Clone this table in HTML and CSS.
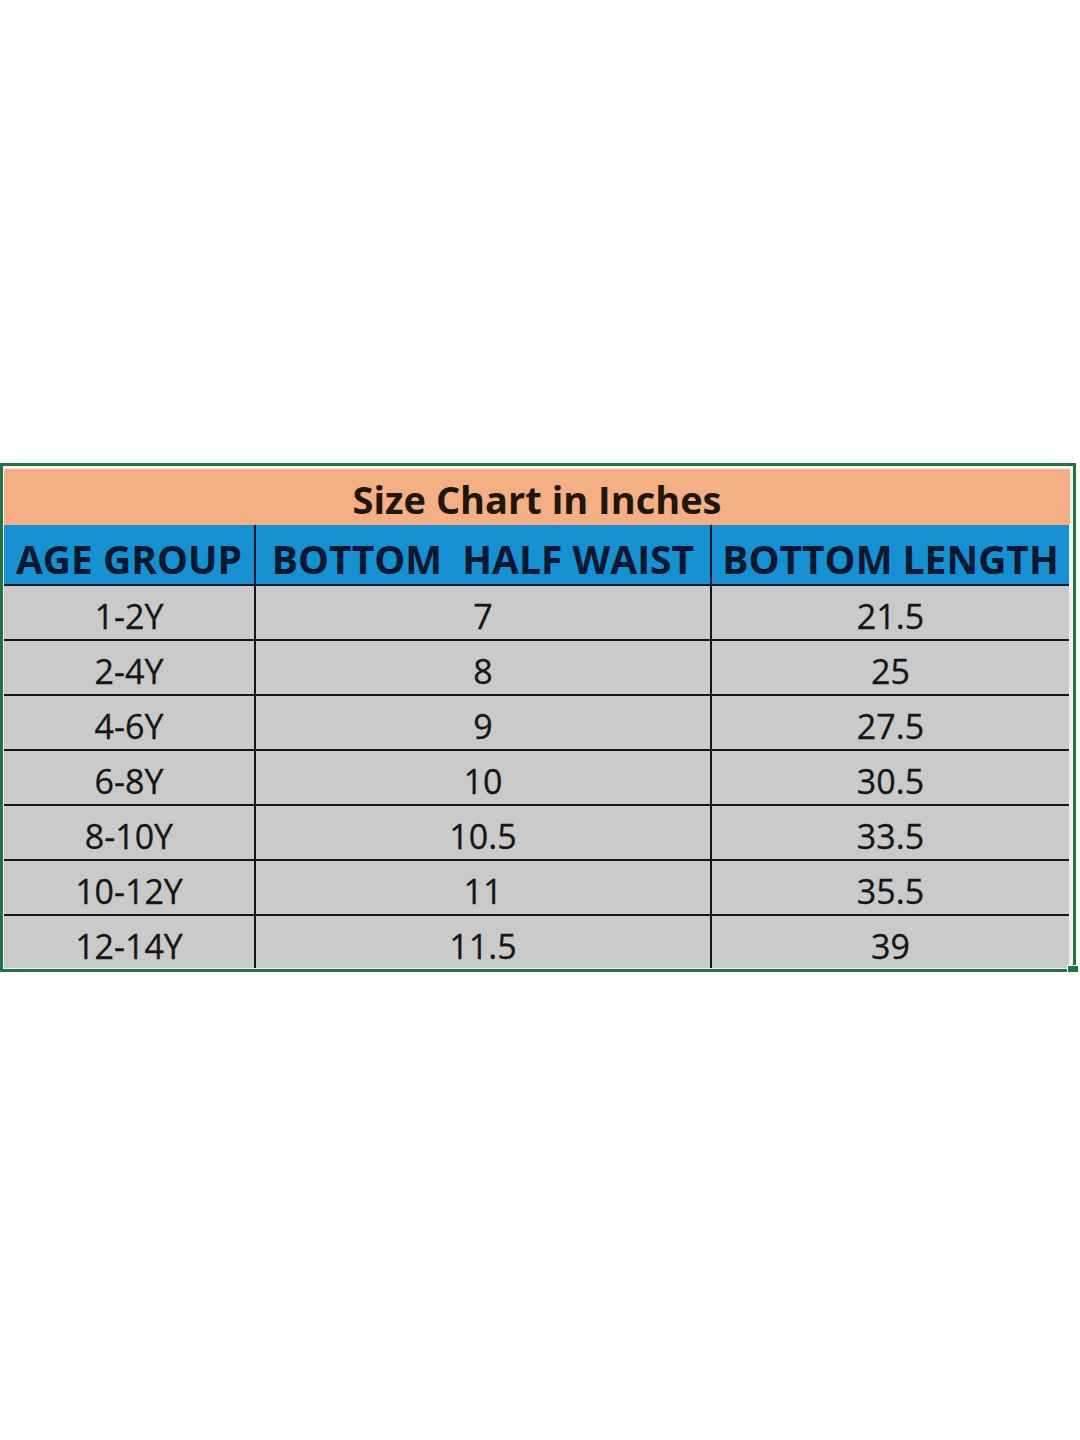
FILE: index.html
```html
<!DOCTYPE html>
<html>
<head>
<meta charset="utf-8">
<title>Size Chart in Inches</title>
<link rel="stylesheet" href="styles.css">
</head>
<body>
<div class="frame">
  <div class="title">Size Chart in Inches</div>
  <div class="grid">
    <div class="hd c1">AGE GROUP</div>
    <div class="hd c2">BOTTOM  HALF WAIST</div>
    <div class="hd c3">BOTTOM LENGTH</div>

    <div class="cell c1">1-2Y</div><div class="cell c2">7</div><div class="cell c3">21.5</div>
    <div class="cell c1">2-4Y</div><div class="cell c2">8</div><div class="cell c3">25</div>
    <div class="cell c1">4-6Y</div><div class="cell c2">9</div><div class="cell c3">27.5</div>
    <div class="cell c1">6-8Y</div><div class="cell c2">10</div><div class="cell c3">30.5</div>
    <div class="cell c1">8-10Y</div><div class="cell c2">10.5</div><div class="cell c3">33.5</div>
    <div class="cell c1">10-12Y</div><div class="cell c2">11</div><div class="cell c3">35.5</div>
    <div class="cell c1 last">12-14Y</div><div class="cell c2 last">11.5</div><div class="cell c3 last">39</div>
  </div>
  <span class="handle"></span>
</div>
</body>
</html>
```

FILE: styles.css
```css
html, body {
  margin: 0;
  padding: 0;
  background: #ffffff;
}

body {
  font-family: "Open Sans", "Noto Sans", sans-serif;
}

.frame {
  position: relative;
  margin-top: 463px;
  width: 1066px;
  border: 3px solid #267048;
  padding: 3px 3px 1px 1px;
  background: #edf3ee;
}

.title {
  height: 56px;
  box-sizing: border-box;
  padding-top: 4px;
  background: #f4b084;
  display: flex;
  align-items: center;
  justify-content: center;
  font-weight: 700;
  font-size: 38px;
  line-height: 1;
  color: #22150c;
}

.grid {
  display: grid;
  grid-template-columns: 252px 456px 357px;
}

.hd {
  height: 61px;
  box-sizing: border-box;
  padding-top: 7px;
  background: #1690d0;
  border-bottom: 2px solid #10182a;
  display: flex;
  align-items: center;
  justify-content: center;
  font-weight: 700;
  font-size: 39px;
  line-height: 1;
  color: #0a1831;
  white-space: pre;
}

.cell {
  height: 55px;
  box-sizing: border-box;
  padding-top: 7px;
  background: #cacaca;
  border-bottom: 2px solid #151515;
  display: flex;
  align-items: center;
  justify-content: center;
  font-size: 34px;
  line-height: 1;
  color: #161616;
  -webkit-text-stroke: 0.3px #161616;
}

.cell.last {
  height: 52px;
  border-bottom: none;
}

.c1, .c2 {
  border-right: 2px solid #151515;
}

.hd.c1, .hd.c2 {
  border-right-color: #10182a;
}

.handle {
  position: absolute;
  right: -6px;
  bottom: -8px;
  width: 10px;
  height: 10px;
  background: #267048;
  border: 1px solid #ffffff;
}
```
